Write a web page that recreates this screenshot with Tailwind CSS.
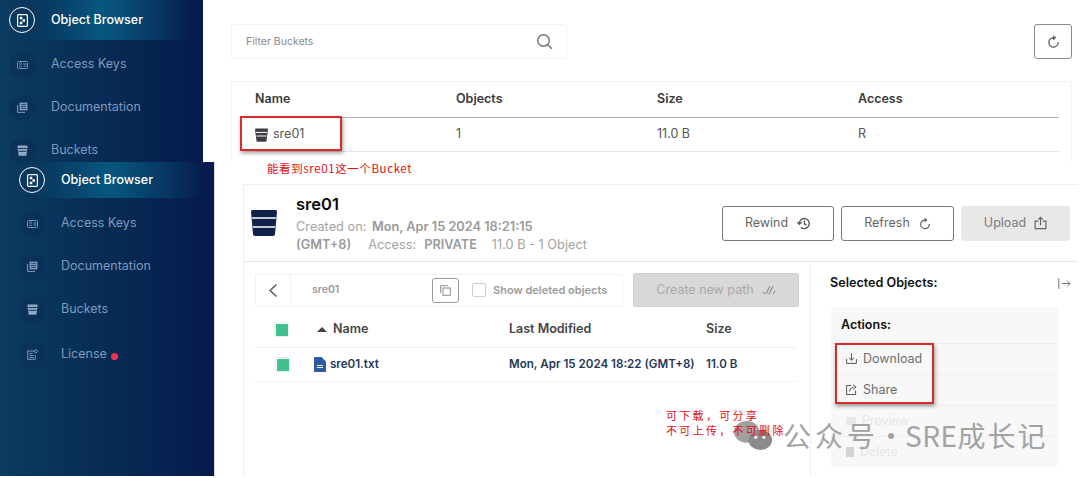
<!DOCTYPE html>
<html lang="zh-CN">
<head>
<meta charset="UTF-8">
<title>Object Browser</title>
<script src="https://cdn.jsdelivr.net/npm/@tailwindcss/browser@4"></script>
</head>
<body class="bg-white">
<div class="relative w-[1080px] h-[478px] overflow-hidden bg-white font-['Inter','Noto_Sans_CJK_SC',sans-serif]">

  <!-- bucket list shot -->
  <div class="absolute left-[231px] top-[24px] w-[841px]">
    <div class="flex items-start justify-between">
      <div class="flex items-center justify-between w-[336px] h-[35px] border border-[#f3f3f3] rounded-[3px] pl-[14px] pr-[13px]">
        <span class="text-[10.5px] text-[#8a8a8a]">Filter Buckets</span>
        <svg class="w-[17px] h-[17px]" viewBox="0 0 17 17" fill="none" stroke="#6f6f6f" stroke-width="1.4"><circle cx="7.5" cy="7.5" r="5.8"/><path d="M11.8 11.8l4 4"/></svg>
      </div>
      <div class="flex items-center justify-center w-[38px] h-[35px] border border-[#8a8a8a] rounded-[3px]">
        <svg class="w-[13px] h-[13px]" viewBox="0 0 14 14" fill="none" stroke="#5a5a5a" stroke-width="1.4"><path d="M12 7.5A5 5 0 1 1 6.500 3"/><path d="M6.500 .4v5.200L10 3z" fill="#5a5a5a" stroke="none"/></svg>
      </div>
    </div>
    <div class="mt-[22px] border border-[#f3f3f3] border-b-0 rounded-t-[3px] pl-[23px] pr-[12px] h-[81px]">
      <div class="grid grid-cols-[201px_201px_201px_1fr] items-center h-[36px] border-b border-[#b4b4b4] text-[12.5px] font-semibold text-[#3a3a3a]">
        <span>Name</span><span>Objects</span><span>Size</span><span>Access</span>
      </div>
      <div class="grid grid-cols-[201px_201px_201px_1fr] items-center h-[34px] border-b border-[#e4e4e4] text-[12.5px] text-[#555]">
        <span class="flex items-center gap-[5px]">
          <svg class="w-[13px] h-[14px]" viewBox="0 0 13 14"><path d="M0 1.500q0-1 1-1h11q1 0 1 1L11.500 13q0 .8-1 .8h-8q-1 0-1-.8z" fill="#3f3f46"/><path d="M1 4.400h11M1.500 8h10" stroke="#fff" stroke-width="1"/></svg>
          sre01
        </span>
        <span>1</span><span>11.0 B</span><span>R</span>
      </div>
    </div>
  </div>

  <!-- top sidebar shot -->
  <div class="absolute left-0 top-0 w-[203px] h-[162px] overflow-hidden bg-linear-to-r from-[#0b3b60] to-[#061b4b]">
    <div class="flex items-center h-[40px] bg-[linear-gradient(90deg,transparent_15%,#07577f_50%,transparent_95%)]">
      <span class="flex items-center justify-center w-[26px] h-[26px] ml-[9px] mr-[16px] rounded-full border border-white">
        <svg class="w-[11px] h-[13px]" viewBox="0 0 11 13"><rect x=".6" y=".6" width="9.800" height="11.800" rx="1" fill="none" stroke="#fff" stroke-width="1.200"/><path d="M2.800 2.800h2.500v2.500H2.800zM5.500 5.300h2.500v2.500H5.500zM2.800 7.800h2.500v2.500H2.800z" fill="#fff"/></svg>
      </span>
      <span class="text-[12.5px] font-medium text-white">Object Browser</span>
    </div>
    <div class="flex items-center h-[43px] mt-[3px]">
      <span class="flex items-center justify-center w-[26px] h-[26px] ml-[9px] mr-[16px] rounded-full bg-[#0a2a55]/40">
        <svg class="w-[11px] h-[9px]" viewBox="0 0 11 9" fill="none" stroke="#6f8fb0"><rect x=".5" y="1.500" width="10" height="7" rx="1"/><circle cx="3.500" cy="3.600" r="1"/><path d="M2 7q1.500-2 3 0M6.500 4h3M6.500 6h3"/></svg>
      </span>
      <span class="text-[12.5px] text-[#7d9abb]">Access Keys</span>
    </div>
    <div class="flex items-center h-[43px]">
      <span class="flex items-center justify-center w-[26px] h-[26px] ml-[9px] mr-[16px] rounded-full bg-[#0a2a55]/40">
        <svg class="w-[11px] h-[11px]" viewBox="0 0 11 11" fill="none" stroke="#7d9abb"><path d="M.6 3v7.400h7.500"/><rect x="2.600" y=".6" width="7.800" height="7.800" fill="#7d9abb" stroke="none"/><path d="M4 2.600h5M4 4.500h5M4 6.400h5" stroke="#0a2f58" stroke-width=".7"/></svg>
      </span>
      <span class="text-[12.5px] text-[#7d9abb]">Documentation</span>
    </div>
    <div class="flex items-center h-[43px]">
      <span class="flex items-center justify-center w-[26px] h-[26px] ml-[9px] mr-[16px] rounded-full bg-[#0a2a55]/40">
        <svg class="w-[11px] h-[11px]" viewBox="0 0 13 14"><path d="M0 1.500q0-1 1-1h11q1 0 1 1L11.500 13q0 .8-1 .8h-8q-1 0-1-.8z" fill="#8fa9c6"/><path d="M1 4.400h11M1.500 8h10" stroke="#0a2f58" stroke-width="1.200"/></svg>
      </span>
      <span class="text-[12.5px] text-[#7d9abb]">Buckets</span>
    </div>
  </div>

  <!-- second sidebar shot -->
  <div class="absolute left-0 top-[162px] w-[215px] h-[314px] border-r border-[#d8dcef] bg-linear-to-r from-[#0b3b60] to-[#061b4b]">
    <div class="flex items-center h-[36px] bg-[linear-gradient(90deg,transparent_15%,#07577f_50%,transparent_95%)]">
      <span class="flex items-center justify-center w-[26px] h-[26px] ml-[19px] mr-[16px] rounded-full border border-white">
        <svg class="w-[11px] h-[13px]" viewBox="0 0 11 13"><rect x=".6" y=".6" width="9.800" height="11.800" rx="1" fill="none" stroke="#fff" stroke-width="1.200"/><path d="M2.800 2.800h2.500v2.500H2.800zM5.500 5.300h2.500v2.500H5.500zM2.800 7.800h2.500v2.500H2.800z" fill="#fff"/></svg>
      </span>
      <span class="text-[12.5px] font-medium text-white">Object Browser</span>
    </div>
    <div class="flex items-center h-[43px] mt-[4px]">
      <span class="flex items-center justify-center w-[26px] h-[26px] ml-[19px] mr-[16px] rounded-full bg-[#0a2a55]/40">
        <svg class="w-[11px] h-[9px]" viewBox="0 0 11 9" fill="none" stroke="#6f8fb0"><rect x=".5" y="1.500" width="10" height="7" rx="1"/><circle cx="3.500" cy="3.600" r="1"/><path d="M2 7q1.500-2 3 0M6.500 4h3M6.500 6h3"/></svg>
      </span>
      <span class="text-[12.5px] text-[#7d9abb]">Access Keys</span>
    </div>
    <div class="flex items-center h-[43px]">
      <span class="flex items-center justify-center w-[26px] h-[26px] ml-[19px] mr-[16px] rounded-full bg-[#0a2a55]/40">
        <svg class="w-[11px] h-[11px]" viewBox="0 0 11 11" fill="none" stroke="#7d9abb"><path d="M.6 3v7.400h7.500"/><rect x="2.600" y=".6" width="7.800" height="7.800" fill="#7d9abb" stroke="none"/><path d="M4 2.600h5M4 4.500h5M4 6.400h5" stroke="#0a2f58" stroke-width=".7"/></svg>
      </span>
      <span class="text-[12.5px] text-[#7d9abb]">Documentation</span>
    </div>
    <div class="flex items-center h-[43px]">
      <span class="flex items-center justify-center w-[26px] h-[26px] ml-[19px] mr-[16px] rounded-full bg-[#0a2a55]/40">
        <svg class="w-[11px] h-[11px]" viewBox="0 0 13 14"><path d="M0 1.500q0-1 1-1h11q1 0 1 1L11.500 13q0 .8-1 .8h-8q-1 0-1-.8z" fill="#8fa9c6"/><path d="M1 4.400h11M1.500 8h10" stroke="#0a2f58" stroke-width="1.200"/></svg>
      </span>
      <span class="text-[12.5px] text-[#7d9abb]">Buckets</span>
    </div>
    <div class="flex items-center h-[45px] mt-[1px]">
      <span class="flex items-center justify-center w-[26px] h-[26px] ml-[19px] mr-[16px] rounded-full bg-[#0a2a55]/40">
        <svg class="w-[11px] h-[11px]" viewBox="0 0 11 11" fill="none" stroke="#7d9abb"><path d="M7 2H.7v8.300h7.600V6"/><path d="M2.500 4.500h3M2.500 6.500h4M2.500 8.500h4"/><circle cx="8.800" cy="2.300" r="1.500"/></svg>
      </span>
      <span class="text-[12.5px] text-[#7d9abb]">License</span>
      <span class="w-[7px] h-[7px] ml-[4px] mt-[3px] rounded-full bg-[#f5304f]"></span>
    </div>
  </div>

  <!-- bucket detail shot -->
  <div class="absolute left-[243px] top-[184px] w-[835px] h-[292px] border-t border-l border-[#f0f0f0] flex flex-col">
    <div class="flex items-center justify-between h-[77px] border-b border-[#e6e6e6] pr-[8px]">
      <div class="flex items-center">
        <svg class="w-[26px] h-[26px] ml-[7px]" viewBox="0 0 26 26"><path d="M0 1.500q0-1.500 1.500-1.500h23q1.500 0 1.500 1.500L24 24q0 2-2 2H4q-2 0-2-2z" fill="#0d2149"/><path d="M1 8h24M2 17h22" stroke="#fff" stroke-width="1.300"/></svg>
        <div class="ml-[19px] w-[300px]">
          <div class="text-[16.5px] leading-[22px] font-semibold text-[#0a0a0a]">sre01</div>
          <div class="mt-[3px] text-[12.75px] leading-[18px] text-[#a3a3a3]">Created on: <b class="ml-[2px] font-semibold text-[#9a9a9a]">Mon, Apr 15 2024 18:21:15</b></div>
          <div class="text-[12.75px] leading-[18px] text-[#a3a3a3] whitespace-nowrap"><b class="font-semibold text-[#9a9a9a]">(GMT+8)</b><span class="ml-[17px]">Access:</span><b class="ml-[8px] font-semibold text-[#9a9a9a]">PRIVATE</b><span class="ml-[15px]">11.0 B - 1 Object</span></div>
        </div>
      </div>
      <div class="flex gap-[7px]">
        <div class="flex items-center justify-center gap-[9px] w-[112px] h-[35px] border border-[#7a7a7a] rounded-[3px] text-[12.5px] text-[#666]">Rewind
          <svg class="w-[14px] h-[13px]" viewBox="0 0 14 13" fill="none" stroke="#555" stroke-width="1.300"><path d="M2.300 6.500a5 5 0 1 1 1.600 3.700"/><path d="M.3 5l2 2.300L4.600 5M7.400 3.500v3.300l2 1.300"/></svg>
        </div>
        <div class="flex items-center justify-center gap-[9px] w-[113px] h-[35px] border border-[#7a7a7a] rounded-[3px] text-[12.5px] text-[#666]">Refresh
          <svg class="w-[12px] h-[13px]" viewBox="0 0 14 14" fill="none" stroke="#555" stroke-width="1.400"><path d="M12 7.500A5 5 0 1 1 6.500 3"/><path d="M6.500 .4v5.200L10 3z" fill="#555" stroke="none"/></svg>
        </div>
        <div class="flex items-center justify-center gap-[8px] w-[109px] h-[35px] rounded-[3px] bg-[#e8e8e8] text-[12.5px] text-[#7b7b7b]">Upload
          <svg class="w-[13px] h-[14px]" viewBox="0 0 14 14" fill="none" stroke="#666" stroke-width="1.300"><path d="M4.500 5H1.200v8h11.600V5H9.500M7 9.500V1M4.500 3.300L7 .9l2.500 2.400"/></svg>
        </div>
      </div>
    </div>
    <div class="flex flex-1 min-h-0">
      <div class="w-[567px] border-r border-[#f0f0f0] pl-[11px] pt-[11px]">
        <div class="flex items-center gap-[10px]">
          <div class="flex items-center w-[368px] h-[33px] border border-[#f2f2f2] rounded-[2px]">
            <span class="flex items-center justify-center w-[35px] h-full border-r border-[#f2f2f2]">
              <svg class="w-[10px] h-[15px]" viewBox="0 0 10 15" fill="none" stroke="#555" stroke-width="1.400"><path d="M8.500 1.500L2 7.500l6.500 6"/></svg>
            </span>
            <span class="ml-[21px] w-[120px] text-[10.5px] font-semibold text-[#9b9b9b]">sre01</span>
            <span class="flex items-center justify-center w-[27px] h-[25px] border border-[#9a9a9a] rounded-[3px]">
              <svg class="w-[11px] h-[11px]" viewBox="0 0 11 11" fill="none" stroke="#8a8a8a"><rect x="3" y="3" width="7.300" height="7.300"/><path d="M.7 8V.7H8"/></svg>
            </span>
            <span class="ml-[13px] w-[14px] h-[14px] border border-[#cfcfcf] rounded-[2px]"></span>
            <span class="ml-[7px] text-[11px] font-semibold text-[#9b9b9b] whitespace-nowrap">Show deleted objects</span>
          </div>
          <div class="flex items-center justify-center gap-[8px] w-[166px] h-[34px] border border-[#d0d0d0] rounded-[2px] bg-[#d8d8d8] text-[12.5px] text-[#a9a9a9]">Create new path
            <svg class="w-[14px] h-[10px]" viewBox="0 0 14 10" fill="none" stroke="#8f8f8f" stroke-width="1.100"><path d="M1 9l1.500-2M4 9l4-8M7 9l4-8M11 9l2-3"/></svg>
          </div>
        </div>
        <div class="flex items-center h-[36px] mt-[5px] w-[541px] border-b border-[#eeeeee] text-[12.5px] font-semibold text-[#444]">
          <span class="flex items-center justify-center ml-[19px] w-[15px] h-[15px] border border-[#dff3ea] rounded-[2px]"><span class="w-[12px] h-[12px] bg-[#44c08f]"></span></span>
          <svg class="ml-[28px] w-[10px] h-[5px]" viewBox="0 0 10 5"><path d="M5 0l5 5H0z" fill="#444"/></svg>
          <span class="ml-[6px] w-[176px]">Name</span>
          <span class="w-[197px]">Last Modified</span>
          <span>Size</span>
        </div>
        <div class="flex items-center h-[34px] w-[541px] border-b border-[#f3f3f3] text-[11.6px] font-semibold text-[#27375a]">
          <span class="flex items-center justify-center ml-[20px] w-[15px] h-[15px] border border-[#dff3ea] rounded-[2px]"><span class="w-[12px] h-[12px] bg-[#44c08f]"></span></span>
          <svg class="ml-[24px] w-[12px] h-[15px]" viewBox="0 0 12 15"><path d="M1 0h6.500L12 4.500V14a1 1 0 0 1-1 1H1a1 1 0 0 1-1-1V1a1 1 0 0 1 1-1z" fill="#2f5aa0"/><path d="M3 8.500h6M3 10.500h6" stroke="#fff" stroke-width=".9"/></svg>
          <span class="ml-[4px] w-[179px]">sre01.txt</span>
          <span class="w-[197px] whitespace-nowrap">Mon, Apr 15 2024 18:22 (GMT+8)</span>
          <span>11.0 B</span>
        </div>
      </div>
      <div class="flex-1 pl-[19px] pr-[7px] pt-[12px]">
        <div class="flex items-center justify-between text-[12.6px] font-semibold text-[#111]">Selected Objects:
          <svg class="w-[13px] h-[11px]" viewBox="0 0 13 11" fill="none" stroke="#777"><path d="M.8 0v11M4 5.500h8M9 2.500l3 3-3 3"/></svg>
        </div>
        <div class="mt-[14px] ml-[1px] mr-[13px] rounded-[3px] bg-[#f8f8f8]">
          <div class="flex items-center h-[37px] pl-[10px] border-b border-[#ececec] text-[12.5px] font-semibold text-[#111]">Actions:</div>
          <div class="flex items-center gap-[6px] h-[31px] pl-[15px] border-b border-[#efefef] text-[12.5px] text-[#6e6e6e]">
            <svg class="w-[11px] h-[11px]" viewBox="0 0 11 11" fill="none" stroke="#555"><path d="M.6 6v4.400h9.800V6M5.500 .5v6.500M3 4.800l2.500 2.400L8 4.800"/></svg>Download
          </div>
          <div class="flex items-center gap-[6px] h-[31px] pl-[15px] border-b border-[#efefef] text-[12.5px] text-[#6e6e6e]">
            <svg class="w-[11px] h-[11px]" viewBox="0 0 11 11" fill="none" stroke="#555"><path d="M5 1.500H.6v9h9V6.500M3.500 7.500q.5-4 4-4.500M7 .8l3 2.300-3 2.300"/></svg>Share
          </div>
          <div class="flex items-center gap-[6px] h-[31px] pl-[15px] border-b border-[#efefef] text-[12.5px] text-[#e6e6e6]">
            <span class="w-[10px] h-[8px] bg-[#e8e8e8]"></span>Preview
          </div>
          <div class="flex items-center gap-[6px] h-[30px] pl-[15px] text-[12.5px] text-[#e6e6e6]">
            <span class="w-[8px] h-[10px] bg-[#d4d4d4]"></span>Delete
          </div>
        </div>
      </div>
    </div>
  </div>

  <!-- watermark -->
  <div class="absolute left-[733px] top-[417px] flex items-center">
    <svg class="w-[40px] h-[33px]" viewBox="0 0 44 36"><ellipse cx="15" cy="14" rx="14" ry="12" fill="#a0a0a0"/><ellipse cx="30" cy="23" rx="13" ry="11" fill="#8a8a8a"/><circle cx="25" cy="20" r="1.800" fill="#fff"/><circle cx="34" cy="20" r="1.800" fill="#fff"/></svg>
    <span class="ml-[10px] text-[28px] leading-[36px] text-[#a3a3a3] whitespace-nowrap font-['Noto_Sans_CJK_SC',sans-serif]"><span class="tracking-[4px]">公众号</span><span class="ml-[-2px]">·</span><span class="tracking-[0.5px]">SRE</span><span class="tracking-[2px]">成长记</span></span>
  </div>

  <!-- annotations drawn over the shots -->
  <div class="absolute left-[240px] top-[116px] w-[102px] h-[35px] border-2 border-[#d92b2b] shadow-[1px_2px_4px_rgba(0,0,0,.4)]"></div>
  <div class="absolute left-[267px] top-[160px] text-[11.5px] leading-[16px] tracking-[0.6px] text-[#e01010] whitespace-nowrap font-['Noto_Sans_CJK_SC',sans-serif]">能看到sre01这一个Bucket</div>
  <div class="absolute left-[835px] top-[343px] w-[99px] h-[61px] border-2 border-[#d92b2b] shadow-[1px_2px_4px_rgba(0,0,0,.4)]"></div>
  <div class="absolute left-[666px] top-[408px] text-[11px] leading-[15px] tracking-[2.300px] text-[#e01010] whitespace-nowrap font-['Noto_Sans_CJK_SC',sans-serif]">可下载，可分享<br>不可上传，不可删除</div>
</div>
</body>
</html>
